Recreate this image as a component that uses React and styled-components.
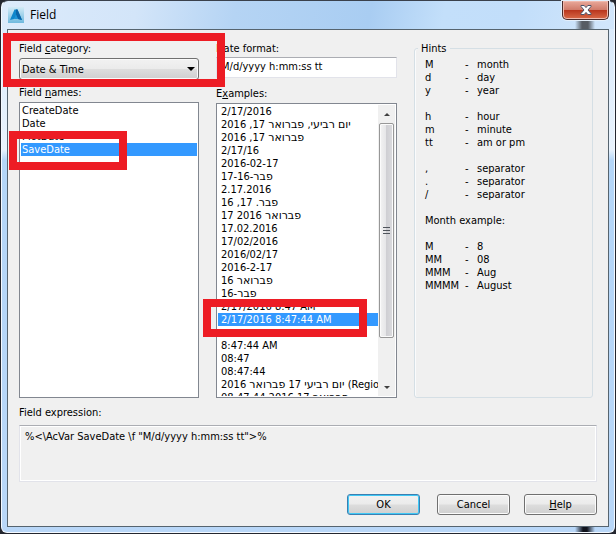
import React, { useState } from "react";
import styled, { createGlobalStyle } from "styled-components";

const GlobalStyle = createGlobalStyle`
  * {
    box-sizing: border-box;
  }

  body {
    margin: 0;
    background: #23262f;
    color: #000;
    font-family: "DejaVu Sans Condensed", "DejaVu Sans", sans-serif;
    font-size: 11px;
    line-height: 13px;
  }
`;

const Window = styled.div`
  margin: 0 1px 1px 1px;
  padding: 0 5px 5px;
  border: 1px solid #f4f9ff;
  border-top-color: #3a414c;
  border-radius: 7px 7px 6px 6px;
  background:
    linear-gradient(90deg, transparent, #10131c 40%, #10131c 60%, transparent)
      573px 100% / 20px 5px no-repeat,
    linear-gradient(90deg, transparent, #565c64 35%, #565c64 65%, transparent)
      573px 0 / 20px 28px no-repeat,
    linear-gradient(
        100deg,
        #dcebfb 0%,
        #d3e5f9 22%,
        #b5d4f4 38%,
        #a9cdf2 60%,
        #c3dffa 72%,
        #c2defa 84%,
        #d2e6fb 100%
      )
      0 0 / 100% 28px no-repeat,
    linear-gradient(#d8e9fb 0, #e9f3fd 28%, #b4d6f8 30%, #b9d7f8 100%);
`;

const TitleBar = styled.header`
  display: flex;
  align-items: flex-start;
  height: 28px;
  padding-left: 1px;
`;

const AppIcon = styled.svg`
  width: 16px;
  height: 16px;
  margin-top: 6px;
`;

const Title = styled.h1`
  flex: 1;
  margin: 6px 0 0 6px;
  font-family: "Open Sans", "Noto Sans", sans-serif;
  font-size: 12px;
  font-weight: 400;
  line-height: 16px;
`;

const CloseButton = styled.button`
  display: flex;
  justify-content: center;
  align-items: center;
  width: 47px;
  height: 19px;
  padding: 0;
  border: 1px solid #4b2c2c;
  border-top: 0;
  border-radius: 0 0 5px 5px;
  box-shadow: inset 0 0 0 1px #f0b9ad, 0 0 0 1px #e4effb;
  background: linear-gradient(#e9a99b, #d17c6b 48%, #b8341c 50%, #d96a48);
`;

const Client = styled.main`
  padding: 12px 11px 11px;
  border: 1px solid #56646f;
  background: #f0f0f0;
`;

const Columns = styled.div`
  display: grid;
  grid-template-columns: 180fr 181fr 179fr;
  gap: 17px;
  padding-right: 4px;
`;

const Column = styled.div`
  display: flex;
  flex-direction: column;
  min-width: 0;
`;

const Group = styled.div`
  position: relative;
  display: flex;
  flex-direction: column;
  gap: ${(props) => props.$gap || 3}px;
  min-width: 0;
  flex: ${(props) => (props.$grow ? 1 : "none")};
  margin-top: ${(props) => props.$before || 0}px;
  margin-bottom: ${(props) => props.$after || 0}px;
`;

const Label = styled.label`
  display: block;
  height: 13px;
  white-space: nowrap;
`;

const SelectBox = styled.div`
  position: relative;
`;

const Select = styled.select`
  appearance: none;
  display: block;
  width: 100%;
  height: 22px;
  padding: 0 20px 0 2px;
  border: 1px solid #707070;
  border-radius: 3px;
  box-shadow: inset 0 0 0 1px #fafafa;
  background: linear-gradient(#f2f2f2, #ebebeb 48%, #dddddd 52%, #cfcfcf);
  color: #000;
  font: inherit;
`;

const SelectArrow = styled.span`
  position: absolute;
  top: 9px;
  right: 4px;
  border: 4px solid transparent;
  border-top-color: #000;
  border-bottom: 0;
  pointer-events: none;
`;

const Input = styled.input`
  width: 100%;
  height: 21px;
  padding: 0 4px 2px;
  border: 1px solid #e2e3ea;
  border-top-color: #abadb3;
  background: #fff;
  color: #000;
  font: inherit;
`;

const ListFrame = styled.div`
  display: flex;
  flex: 1;
  min-height: ${(props) => props.$minHeight || 0}px;
  padding: 1px;
  border: 1px solid #828790;
  background: #fff;
`;

const List = styled.ul`
  flex: 1;
  min-width: 0;
  height: ${(props) => (props.$height ? `${props.$height}px` : "auto")};
  margin: 0;
  padding: 0;
  overflow: hidden;
  list-style: none;
`;

const Item = styled.li`
  height: 13px;
  padding-left: ${(props) => props.$indent}px;
  overflow: hidden;
  white-space: nowrap;
  cursor: default;
  background: ${(props) => (props.$selected ? "#3399ff" : "transparent")};
  color: ${(props) => (props.$selected ? "#fff" : "#000")};
`;

const Hebrew = styled.span`
  font-family: "DejaVu Sans", sans-serif;
`;

const ScrollTrack = styled.div`
  display: flex;
  flex-direction: column;
  width: 17px;
  padding: 0 1px;
  background: #f0f0f0;
`;

const ScrollArrow = styled.div`
  display: flex;
  justify-content: center;
  align-items: center;
  height: 18px;

  &::before {
    content: "";
    border: 3px solid transparent;
    border-${(props) => (props.$up ? "bottom" : "top")}-color: #404040;
    border-${(props) => (props.$up ? "top" : "bottom")}: 0;
  }
`;

const ScrollThumb = styled.div`
  display: flex;
  flex-direction: column;
  justify-content: center;
  align-items: center;
  gap: 2px;
  height: 215px;
  border: 1px solid #979797;
  border-radius: 2px;
  box-shadow: inset 0 0 0 1px #fbfbfb;
  background: linear-gradient(90deg, #f3f3f3, #e6e6e8 45%, #cfcfd3 50%, #dcdcdf);
`;

const ScrollSpace = styled.div`
  flex: 1;
`;

const Grip = styled.span`
  width: 7px;
  height: 1px;
  background: #50555c;
`;

const HintsBox = styled.fieldset`
  min-width: 0;
  margin: 0;
  padding: 3px 10px 0;
  border: 1px solid #d5dfe5;
  border-radius: 3px;
  box-shadow: inset 1px 0 #fafbfc;
`;

const Legend = styled.legend`
  margin-left: -7px;
  padding: 0 3px;
`;

const HintsTable = styled.table`
  border-collapse: collapse;

  td {
    height: 13px;
    padding: 0;
    white-space: nowrap;
  }

  td:nth-child(1) {
    width: 40px;
  }

  td:nth-child(2) {
    width: 12px;
  }
`;

const Expression = styled.output`
  display: block;
  height: 57px;
  padding: 4px 5px;
  border: 1px solid #e2e3ea;
  border-top-color: #abadb3;
  box-shadow: inset 0 0 0 1px #fff;
`;

const Buttons = styled.footer`
  display: flex;
  justify-content: flex-end;
  gap: 14px;
  margin-top: 12px;
`;

const Button = styled.button`
  width: 73px;
  height: 21px;
  padding: 0;
  border: 1px solid ${(props) => (props.$primary ? "#3c7fb1" : "#707070")};
  border-radius: 3px;
  box-shadow: inset 0 0 0 1px ${(props) => (props.$primary ? "#3fc8f5" : "#fbfbfb")};
  background: linear-gradient(#f2f2f2, #ebebeb 48%, #dddddd 52%, #cfcfcf);
  color: #000;
  font: inherit;

  &:first-child {
    margin-right: 3px;
  }
`;

// Red frame drawn over a part of the dialog
const Highlight = styled.div`
  position: absolute;
  z-index: 1;
  top: ${(props) => props.$top}px;
  left: ${(props) => props.$left}px;
  width: ${(props) => props.$width}px;
  height: ${(props) => props.$height}px;
  border: 8px solid #ed1c24;
  pointer-events: none;
`;

const fieldNames = ["CreateDate", "Date", "PlotDate", "SaveDate"];

const examples = [
  "2/17/2016",
  "יום רביעי, פברואר 17, 2016",
  "פברואר 17, 2016",
  "2/17/16",
  "2016-02-17",
  "פבר-17-16",
  "2.17.2016",
  "פבר. 17, 16",
  "17 פברואר 2016",
  "17.02.2016",
  "17/02/2016",
  "2016/02/17",
  "2016-2-17",
  "פברואר 16",
  "פבר-16",
  "2/17/2016 8:47 AM",
  "2/17/2016 8:47:44 AM",
  "",
  "8:47:44 AM",
  "08:47",
  "08:47:44",
  "יום רביעי 17 פברואר 2016 (Regional long date)",
  "08:47:44 2016 פברואר 17",
];

const hints = [
  ["M", "month"],
  ["d", "day"],
  ["y", "year"],
  null,
  ["h", "hour"],
  ["m", "minute"],
  ["tt", "am or pm"],
  null,
  [",", "separator"],
  [".", "separator"],
  ["/", "separator"],
  null,
  "Month example:",
  null,
  ["M", "8"],
  ["MM", "08"],
  ["MMM", "Aug"],
  ["MMMM", "August"],
];

// Hebrew words take the wider face, digits stay condensed
function ItemText({ text }) {
  return text
    .split(/([\u05d0-\u05ea]+)/)
    .map((part, index) =>
      index % 2 ? <Hebrew key={index}>{part}</Hebrew> : part
    );
}

function ListBox({ id, items, selected, onSelect, indent, height }) {
  return (
    <List role="listbox" aria-labelledby={id} tabIndex={0} $height={height}>
      {items.map((item, index) => (
        <Item
          key={index}
          role="option"
          aria-selected={index === selected}
          $selected={index === selected}
          $indent={indent}
          onClick={() => onSelect(index)}
        >
          <ItemText text={item} />
        </Item>
      ))}
    </List>
  );
}

function HintRow({ hint }) {
  if (!hint || typeof hint === "string") {
    return (
      <tr>
        <td colSpan={3}>{hint}</td>
      </tr>
    );
  }
  return (
    <tr>
      <td>{hint[0]}</td>
      <td>-</td>
      <td>{hint[1]}</td>
    </tr>
  );
}

export default function App() {
  const [name, setName] = useState(3);
  const [example, setExample] = useState(16);
  const [format, setFormat] = useState("M/d/yyyy h:mm:ss tt");

  return (
    <>
      <GlobalStyle />
      <Window>
        <TitleBar>
          <AppIcon viewBox="0 0 16 16" aria-hidden="true">
            <defs>
              <linearGradient id="tile" x1="0" y1="0" x2="0" y2="1">
                <stop offset="0" stopColor="#d3ebf7" />
                <stop offset="1" stopColor="#6fb9de" />
              </linearGradient>
            </defs>
            <rect width="16" height="16" fill="url(#tile)" />
            <path d="M6.500 2.500h3L14 13l-4-1-2-1-2 1-4 1z" fill="#0f86cb" />
            <path d="M8 2.500h1.500L14 13l-4-1-2-4z" fill="#0a64a8" />
            <path d="M8 7.500l2 4.500H6z" fill="#1d93d6" />
          </AppIcon>
          <Title>Field</Title>
          <CloseButton type="button" aria-label="Close">
            <svg width="12" height="10" viewBox="0 0 12 10">
              <path
                d="M1 .5h3.2L6 2.6 7.800.5H11v1L8 5l3 3.500v1H7.800L6 7.400 4.200 9.500H1v-1L4 5 1 1.500z"
                fill="#fff"
                stroke="#4c5368"
              />
            </svg>
          </CloseButton>
        </TitleBar>

        <Client>
          <Columns>
            <Column>
              <Group $after={6}>
                <Label htmlFor="category">
                  Field <u>c</u>ategory:
                </Label>
                <SelectBox>
                  <Select id="category" defaultValue="Date & Time">
                    <option>Date &amp; Time</option>
                  </Select>
                  <SelectArrow />
                </SelectBox>
                <Highlight $top={-9} $left={-16} $width={222} $height={54} />
              </Group>
              <Group $grow>
                <Label as="div" id="names">
                  Field <u>n</u>ames:
                </Label>
                <ListFrame>
                  <ListBox
                    id="names"
                    items={fieldNames}
                    selected={name}
                    onSelect={setName}
                    indent={1}
                  />
                </ListFrame>
                <Highlight $top={45} $left={-10} $width={118} $height={39} />
              </Group>
            </Column>

            <Column>
              <Group $gap={2} $after={9}>
                <Label htmlFor="format">Date format:</Label>
                <Input
                  id="format"
                  type="text"
                  value={format}
                  onChange={(event) => setFormat(event.target.value)}
                />
              </Group>
              <Group $grow>
                <Label as="div" id="examples">
                  E<u>x</u>amples:
                </Label>
                <ListFrame $minHeight={295}>
                  <ListBox
                    id="examples"
                    items={examples}
                    selected={example}
                    onSelect={setExample}
                    indent={3}
                    height={291}
                  />
                  <ScrollTrack aria-hidden="true">
                    <ScrollArrow $up />
                    <ScrollThumb>
                      <Grip />
                      <Grip />
                      <Grip />
                    </ScrollThumb>
                    <ScrollSpace />
                    <ScrollArrow />
                  </ScrollTrack>
                </ListFrame>
                <Highlight $top={212} $left={-13} $width={164} $height={38} />
              </Group>
            </Column>

            <HintsBox>
              <Legend>Hints</Legend>
              <HintsTable>
                <tbody>
                  {hints.map((hint, index) => (
                    <HintRow key={index} hint={hint} />
                  ))}
                </tbody>
              </HintsTable>
            </HintsBox>
          </Columns>

          <Group $gap={6} $before={8}>
            <Label htmlFor="expression">Field expression:</Label>
            <Expression id="expression">
              {'%<\\AcVar SaveDate \\f "M/d/yyyy h:mm:ss tt">%'}
            </Expression>
          </Group>

          <Buttons>
            <Button type="button" $primary>
              OK
            </Button>
            <Button type="button">Cancel</Button>
            <Button type="button">
              <u>H</u>elp
            </Button>
          </Buttons>
        </Client>
      </Window>
    </>
  );
}
